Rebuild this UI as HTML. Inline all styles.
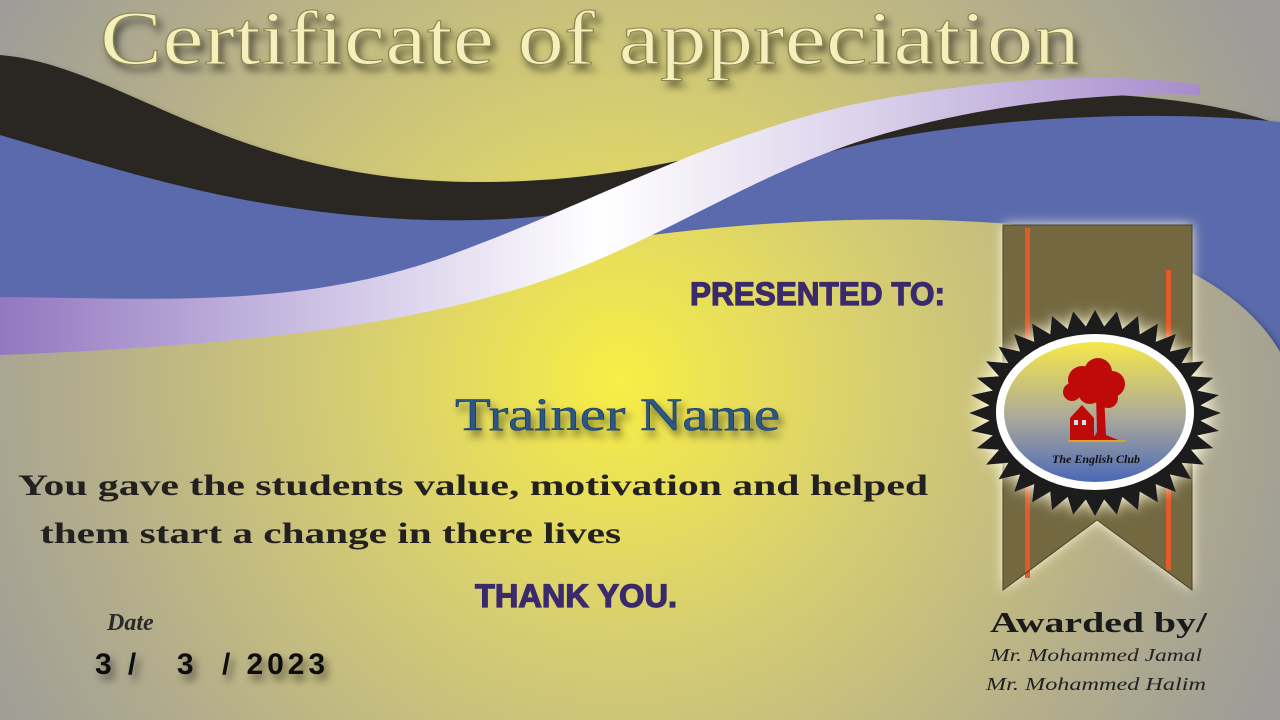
<!DOCTYPE html>
<html><head><meta charset="utf-8"><style>
html,body{margin:0;padding:0;width:1280px;height:720px;overflow:hidden}
svg{display:block}
</style></head><body>
<svg width="1280" height="720" viewBox="0 0 1280 720" xmlns="http://www.w3.org/2000/svg">
<defs>
<radialGradient id="bg" gradientUnits="userSpaceOnUse" cx="620" cy="380" r="720">
<stop offset="0" stop-color="#f8ee45"/>
<stop offset="0.35" stop-color="#d8cf70"/>
<stop offset="0.75" stop-color="#b3ad8c"/>
<stop offset="1" stop-color="#9d9c98"/>
</radialGradient>
<linearGradient id="rib" x1="0" y1="0" x2="1" y2="0">
<stop offset="0" stop-color="#9278c0"/>
<stop offset="0.3" stop-color="#d4cae8"/>
<stop offset="0.5" stop-color="#ffffff"/>
<stop offset="0.75" stop-color="#d6cbe8"/>
<stop offset="1" stop-color="#a68ccc"/>
</linearGradient>
<linearGradient id="seal" x1="0" y1="0" x2="0" y2="1">
<stop offset="0" stop-color="#f5e84a"/>
<stop offset="0.55" stop-color="#aaa89a"/>
<stop offset="1" stop-color="#4a68b8"/>
</linearGradient>
<filter id="sh" x="-10%" y="-10%" width="120%" height="130%"><feDropShadow dx="4" dy="6" stdDeviation="4" flood-color="#000" flood-opacity="0.5"/></filter>
<filter id="glow" x="-20%" y="-20%" width="140%" height="140%"><feDropShadow dx="0" dy="0" stdDeviation="6" flood-color="#fffbe0" flood-opacity="1"/></filter>
</defs>
<rect width="1280" height="720" fill="url(#bg)"/>
<path d="M0,55 C120,65 230,180 470,182 C700,184 820,105 1000,95 C1130,88 1230,105 1280,125 L1280,720 L0,720 Z" fill="#2a2624" filter="url(#sh)"/>
<path d="M0,135 C120,170 250,215 430,220 C620,225 720,175 880,140 C1030,112 1180,112 1280,122 L1280,720 L0,720 Z" fill="#5a6aac" filter="url(#sh)"/>
<path d="M0,350 C200,345 400,310 560,250 C700,222 900,210 1050,228 C1180,250 1250,300 1280,352 L1280,720 L0,720 Z" fill="url(#bg)" filter="url(#sh)"/>
<path d="M0,297 C150,298 300,310 450,255 C600,200 700,140 850,105 C1000,75 1120,72 1200,85 L1200,95 C1120,92 1000,100 880,135 C760,170 680,230 560,275 C420,325 250,345 0,355 Z" fill="url(#rib)"/>
<text x="590" y="64" text-anchor="middle" font-family="Liberation Serif, serif" font-size="76" fill="#f4efbb" stroke="#8a8450" stroke-width="1" filter="url(#sh)" textLength="980" lengthAdjust="spacingAndGlyphs">Certificate of appreciation</text>
<g filter="url(#glow)">
<path d="M1003,225 L1192,225 L1192,590 L1097,520 L1003,590 Z" fill="#736740"/>
</g>
<rect x="1025" y="228" width="5" height="350" fill="#e05a2a"/>
<rect x="1166" y="270" width="5" height="300" fill="#e05a2a"/>
<path d="M1003,225 L1192,225 L1192,590 L1097,520 L1003,590 Z" fill="none" stroke="#4a4228" stroke-width="1"/>
<g filter="url(#glow)">
<polygon id="star" fill="#1e1c1a" points=""/>
</g>
<ellipse cx="1095" cy="412" rx="99" ry="78" fill="#fff"/>
<ellipse cx="1095" cy="412" rx="91" ry="70" fill="url(#seal)"/>
<g fill="#c00a0a">
<circle cx="1082" cy="380" r="14"/><circle cx="1098" cy="372" r="14"/><circle cx="1112" cy="384" r="13"/><circle cx="1090" cy="392" r="12"/><circle cx="1108" cy="398" r="10"/><circle cx="1072" cy="392" r="9"/>
<path d="M1096,395 L1104,395 L1106,435 L1118,440 L1092,440 L1097,432 Z"/>
<path d="M1070,418 L1082,405 L1094,418 L1094,440 L1070,440 Z"/>
</g>
<rect x="1074" y="420" width="4" height="5" fill="#ddd"/><rect x="1082" y="420" width="4" height="5" fill="#ddd"/>
<rect x="1068" y="440" width="58" height="2" fill="#e0a020"/>
<text x="1096" y="463" text-anchor="middle" font-family="Liberation Serif, serif" font-style="italic" font-weight="bold" font-size="12" fill="#111">The English Club</text>
<text x="690" y="305" font-family="Liberation Sans Narrow, Liberation Sans, sans-serif" font-weight="bold" font-size="32" fill="#3a2a6c" stroke="#3a2a6c" stroke-width="1.2" textLength="255" lengthAdjust="spacingAndGlyphs">PRESENTED TO:</text>
<text x="455" y="430" font-family="Liberation Serif, serif" font-size="47" fill="#2a5688" stroke="#1a3a60" stroke-width="0.6" textLength="325" lengthAdjust="spacingAndGlyphs" filter="url(#sh)">Trainer Name</text>
<text x="18" y="495" font-family="Liberation Serif, serif" font-weight="bold" font-size="30" fill="#232020" textLength="910" lengthAdjust="spacingAndGlyphs">You gave the students value, motivation and helped</text>
<text x="40" y="543" font-family="Liberation Serif, serif" font-weight="bold" font-size="30" fill="#232020" textLength="581" lengthAdjust="spacingAndGlyphs">them start a change in there lives</text>
<text x="475" y="607" font-family="Liberation Sans Narrow, Liberation Sans, sans-serif" font-weight="bold" font-size="32" fill="#3a2a6c" stroke="#3a2a6c" stroke-width="1.2" textLength="202" lengthAdjust="spacingAndGlyphs">THANK YOU.</text>
<text x="107" y="630" font-family="Liberation Serif, serif" font-style="italic" font-weight="bold" font-size="24" fill="#2a2a2a">Date</text>
<text x="95" y="674" font-family="Liberation Sans, sans-serif" font-weight="bold" font-size="30" fill="#111" filter="url(#sh)" xml:space="preserve" textLength="230" lengthAdjust="spacing">3 /   3  / 2023</text>
<text x="990" y="632" font-family="Liberation Serif, serif" font-weight="bold" font-size="29" fill="#1a1a1a" textLength="217" lengthAdjust="spacingAndGlyphs">Awarded by/</text>
<text x="990" y="661" font-family="Liberation Serif, serif" font-style="italic" font-size="18" fill="#222" textLength="212" lengthAdjust="spacingAndGlyphs">Mr. Mohammed Jamal</text>
<text x="986" y="690" font-family="Liberation Serif, serif" font-style="italic" font-size="18" fill="#222" textLength="220" lengthAdjust="spacingAndGlyphs">Mr. Mohammed Halim</text>
</svg>
<script>
(function(){var cx=1095,cy=413,n=36,pts=[];for(var i=0;i<n*2;i++){var a=Math.PI*i/n;var r=i%2?106:126;pts.push((cx+r*Math.cos(a)).toFixed(1)+','+(cy+r*Math.sin(a)*0.82).toFixed(1));}document.getElementById('star').setAttribute('points',pts.join(' '));})();
</script>
</body></html>
